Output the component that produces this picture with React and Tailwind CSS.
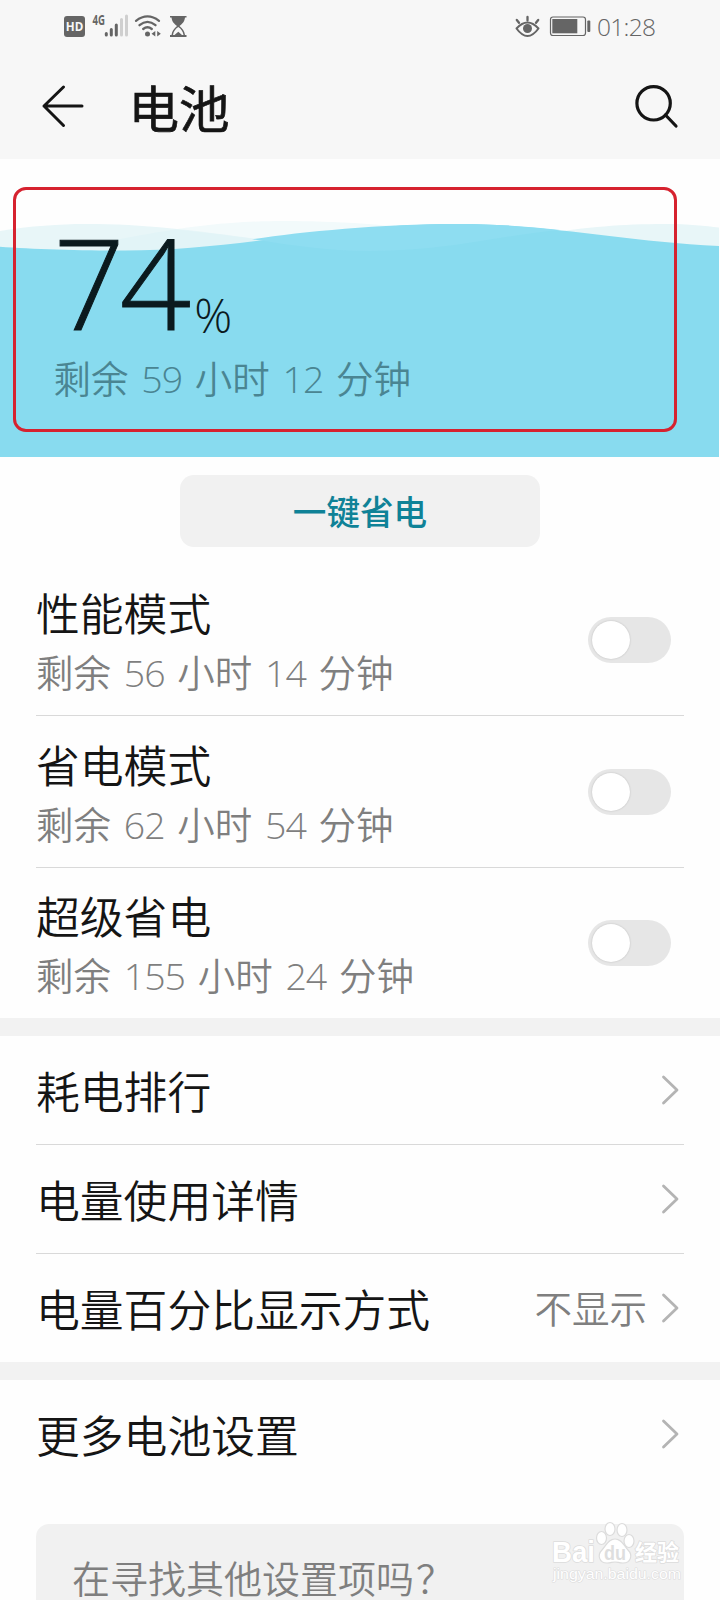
const modes = [
  { title: '性能模式', note: '剩余 56 小时 14 分钟', height: 'h-[151px]' },
  { title: '省电模式', note: '剩余 62 小时 54 分钟', height: 'h-[151px]' },
  { title: '超级省电', note: '剩余 155 小时 24 分钟', height: 'h-[150px]' },
];

/* Sets runs of digits lighter and tighter than the Chinese text round them. */
function Duration({ text }) {
  return (
    <span className="[word-spacing:3px]">
      {text.split(/(\d+)/).map((part, i) =>
        /\d/.test(part) ? (
          <span key={i} className="font-light tracking-[-1px]">{part}</span>
        ) : (
          part
        ),
      )}
    </span>
  );
}

function StatusBar() {
  return (
    <div className="flex h-[53px] items-start justify-between pt-[8px] pr-[64px] pl-[63px] text-[#656565]">
      <svg width="125" height="32" viewBox="63 8 125 32">
        <rect x="64" y="16" width="21" height="21" rx="3" fill="#656565" />
        <text x="74.5" y="31" textAnchor="middle" fontFamily="Open Sans" fontWeight="700" fontSize="13" textLength="17.5" lengthAdjust="spacingAndGlyphs" fill="#f7f7f7">HD</text>
        <text x="92.5" y="24.5" fontFamily="Open Sans" fontWeight="700" fontSize="13.5" textLength="12.5" lengthAdjust="spacingAndGlyphs" fill="#656565">4G</text>
        <g strokeWidth="3" strokeLinecap="round" stroke="#656565">
          <path d="M106.3 33.5V35M111.3 29.5V35M116.3 25V35" />
          <path d="M121.5 19.5V35M126.5 16V35" stroke="#cfcfcf" />
        </g>
        <g fill="none" stroke="#656565" strokeWidth="2.300" strokeLinecap="round">
          <path d="M136 20.8Q147.500 12 159 20.8" />
          <path d="M139.500 25.200Q147.500 18.500 155.500 25.200" />
          <path d="M143.200 29Q147.500 25.500 151.800 29" />
        </g>
        <circle cx="147.500" cy="34" r="2.500" fill="#656565" />
        <path d="M155.300 31V36.500L151.500 33.800ZM157.200 31L160.800 33.800L157.200 36.500Z" fill="#656565" />
        <path d="M170 16H186.500V17.500H185C184.500 22 182 24 179.500 26C182.500 28.500 184.500 31 185 35H186.500V37H170V35H171.500C172 31 174 28.500 177 26C174.500 24 172 22 171.500 17.500H170Z" fill="#656565" />
        <path d="M178.300 27C175.300 29 173.500 31.500 173 35H174.500L178.300 31.800L182 35H183.500C183 31.500 181.200 29 178.300 27Z" fill="#f7f7f7" />
      </svg>
      <div className="flex pt-[5px]">
        <svg width="83" height="27" viewBox="514 13 83 27">
          <g fill="none" stroke="#656565" strokeLinecap="round">
            <path d="M516.500 28.500Q527.500 16.500 538.500 28.500Q527.500 43.500 516.500 28.500Z" strokeWidth="2" strokeLinejoin="round" />
            <path d="M527.500 17V20.500M516.800 20L519 22.800M538.200 20L536 22.800" strokeWidth="2.300" />
          </g>
          <circle cx="527.500" cy="28.500" r="4.500" fill="#656565" />
          <rect x="550.500" y="17" width="35" height="18.500" rx="2.500" fill="none" stroke="#656565" strokeWidth="1.200" />
          <rect x="552.300" y="19" width="25" height="14.300" fill="#656565" />
          <rect x="587.300" y="20.500" width="3" height="11.500" rx="1" fill="#656565" />
        </svg>
        <span className="w-[59px] text-[24.500px] leading-[27px] font-light tracking-[-0.700px] whitespace-nowrap text-[#656565]">01:28</span>
      </div>
    </div>
  );
}

function Header() {
  return (
    <div className="flex h-[106px] items-start pr-[40px] pl-[40px] text-[#151515]">
      <svg className="mt-[30px]" width="46" height="46" viewBox="40 83 46 46" fill="none" stroke="currentColor" strokeWidth="3" strokeLinecap="round" strokeLinejoin="round">
        <path d="M82 106H44M63.500 87L44 106L63.500 125.500" />
      </svg>
      <h1 className="mt-[21px] ml-[42.500px] flex-1 text-[50.500px] leading-[70px] font-normal [-webkit-text-stroke:0.700px_#151515]">电池</h1>
      <svg className="mt-[30px]" width="46" height="46" viewBox="634 83 46 46" fill="none" stroke="currentColor" strokeWidth="3.200" strokeLinecap="round">
        <circle cx="653.600" cy="103.300" r="16.700" />
        <path d="M665.500 115L676 126" />
      </svg>
    </div>
  );
}

function BatteryLevel() {
  return (
    <div className="grid h-[298px] grid-cols-1 grid-rows-1">
      <svg className="col-start-1 row-start-1" width="720" height="298" viewBox="0 159 720 298">
        <path d="M90 243C150 235 200 221 285 221C330 221 400 224 440 234V252H90Z" fill="#f2fafb" />
        <path d="M0 231C30 226 60 224 85 224C150 224 200 231 270 241V254H0Z" fill="#e8f6f8" />
        <path d="M100 243C125 238 150 233 175 229.500C205 232 240 237 270 241V252H100Z" fill="#e2f4f7" />
        <path d="M540 234C590 227 620 224 665 224C690 224 705 226 719 227.500V250H540Z" fill="#e8f6f8" />
        <path d="M0 246.700C30 249 80 250.500 125 250.500C235 250.500 335 224 457 224C550 224 620 241 719 246V457H0Z" fill="#88dbef" />
        <path d="M252 239.300C300 232 380 224 457 224C495 224 530 226.500 560 230C500 235 450 251 370 251C325 251 290 245 252 239.300Z" fill="#8eddf1" />
      </svg>
      <div className="col-start-1 row-start-1 mt-[28px] ml-[13px] h-[245px] w-[664px] rounded-[13px] border-[3.500px] border-[#d6222f] pl-[37.500px]">
        <div className="flex h-[150px] items-baseline font-light text-[#0b1a1e]">
          <span className="mt-[26px] text-[125px] leading-[132px] tracking-[-5px] [-webkit-text-stroke:1px_#0b1a1e]">74</span>
          <span className="relative top-[3px] ml-[8px] text-[47px] leading-[50px]">%</span>
        </div>
        <p className="mt-[14px] text-[37.500px] leading-[50px] font-[350] text-[#4a8592]">
          <Duration text="剩余 59 小时 12 分钟" />
        </p>
      </div>
    </div>
  );
}

function Divider() {
  return <div className="mx-[36px] h-px bg-[#d9d9d9]" />;
}

function Toggle() {
  return (
    <button className="flex h-[46px] w-[83px] items-center rounded-full bg-[#e6e6e6] pl-[4px]">
      <span className="size-[38px] rounded-full bg-white shadow-[0_0_2px_rgba(0,0,0,0.2)]" />
    </button>
  );
}

function ModeRow({ title, note, height }) {
  return (
    <div className={`flex items-center justify-between pr-[49px] pl-[36px] ${height}`}>
      <div className="pt-[5px]">
        <div className="text-[43.800px] leading-[60px] font-[350] text-[#151515]">{title}</div>
        <div className="text-[37.500px] leading-[57px] font-[350] text-[#7f7f7f]">
          <Duration text={note} />
        </div>
      </div>
      <Toggle />
    </div>
  );
}

function LinkRow({ title, value }) {
  return (
    <div className="flex h-[108px] items-center pr-[40px] pl-[36px]">
      <span className="flex-1 pt-[4px] text-[43.800px] leading-[60px] font-[350] text-[#151515]">{title}</span>
      {value && <span className="mr-[13px] pt-[2px] text-[37.500px] leading-[50px] font-[350] text-[#7f7f7f]">{value}</span>}
      <svg width="20" height="32" viewBox="0 0 20 32" fill="none" stroke="#b4b4b4" strokeWidth="2.800" strokeLinecap="round" strokeLinejoin="round">
        <path d="M3.500 3L17 16L3.500 29" />
      </svg>
    </div>
  );
}

function Watermark() {
  return (
    <svg className="absolute top-[1518px] left-[548px]" width="140" height="72" viewBox="548 1518 140 72">
      <g fill="#ffffff" stroke="#dcdcdc" strokeWidth="1.600" strokeLinejoin="round">
        <text x="552" y="1562" fontFamily="Liberation Sans" fontWeight="700" fontSize="29" textLength="43" lengthAdjust="spacingAndGlyphs" paintOrder="stroke">Bai</text>
        <ellipse cx="601.500" cy="1538" rx="5" ry="6.500" strokeWidth="1.200" />
        <ellipse cx="610" cy="1529" rx="5" ry="6.500" strokeWidth="1.200" />
        <ellipse cx="622" cy="1530" rx="5" ry="6.500" strokeWidth="1.200" />
        <ellipse cx="629" cy="1541" rx="5" ry="6.500" strokeWidth="1.200" />
        <path strokeWidth="1.200" d="M615 1539C622 1539 624 1546 628 1550C633 1555 631 1563 623 1563C619 1563 618 1562 615 1562C612 1562 611 1563 607 1563C599 1563 597 1555 602 1550C606 1546 608 1539 615 1539Z" />
        <text x="635" y="1560" fontFamily="Noto Sans CJK SC" fontWeight="700" fontSize="22" textLength="44" lengthAdjust="spacingAndGlyphs" paintOrder="stroke">经验</text>
        <text x="553" y="1579" fontFamily="Liberation Sans" fontSize="15.500" textLength="128" lengthAdjust="spacingAndGlyphs" strokeWidth="1.200" paintOrder="stroke">jingyan.baidu.com</text>
      </g>
      <text x="604" y="1560" fontFamily="Liberation Sans" fontWeight="700" fontSize="20" textLength="22" lengthAdjust="spacingAndGlyphs" fill="#dedede">du</text>
    </svg>
  );
}

export default function App() {
  return (
    <div className="relative flex h-[1600px] w-[720px] flex-col overflow-hidden bg-[#fefefe] font-['Open_Sans','Noto_Sans_CJK_SC',sans-serif]" lang="zh-CN">
      <header className="bg-[#f7f7f7]">
        <StatusBar />
        <Header />
      </header>
      <main>
        <BatteryLevel />
        <div className="flex h-[107px] justify-center pt-[18px]">
          <button className="h-[72px] w-[360px] rounded-[14px] bg-[#f1f1f1] pt-[2px] text-[33.600px] font-medium text-[#0f8297]">一键省电</button>
        </div>
        <ModeRow {...modes[0]} />
        <Divider />
        <ModeRow {...modes[1]} />
        <Divider />
        <ModeRow {...modes[2]} />
        <div className="h-[18px] bg-[#f2f2f2]" />
        <LinkRow title="耗电排行" />
        <Divider />
        <LinkRow title="电量使用详情" />
        <Divider />
        <LinkRow title="电量百分比显示方式" value="不显示" />
        <div className="h-[18px] bg-[#f2f2f2]" />
        <LinkRow title="更多电池设置" />
        <div className="mx-[36px] mt-[36px] h-[120px] rounded-t-[13px] bg-[#f1f1f1] pt-[29px] pl-[36px] text-[38px] leading-[50px] font-[350] text-[#7f7f7f]">
          在寻找其他设置项吗<span className="pl-[2px]">？</span>
        </div>
      </main>
      <Watermark />
    </div>
  );
}
